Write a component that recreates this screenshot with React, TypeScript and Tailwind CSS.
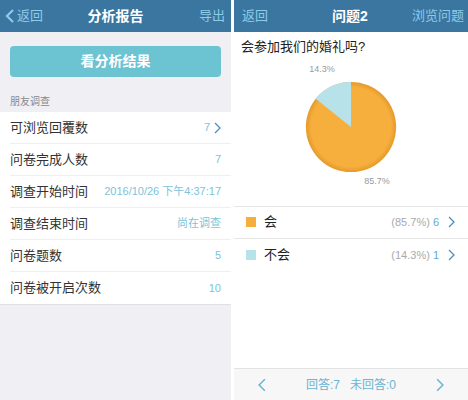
import React from "react";

const font = { fontFamily: '"Liberation Sans", "Noto Sans CJK SC", sans-serif' };

function Chevron({ className = "", dir = "right" }: { className?: string; dir?: "left" | "right" }) {
  return (
    <svg width="7" height="12" viewBox="0 0 7 12" className={className} fill="none">
      {dir === "right" ? (
        <path d="M1 1 L6 6 L1 11" stroke="currentColor" strokeWidth="1.3" />
      ) : (
        <path d="M6 1 L1 6 L6 11" stroke="currentColor" strokeWidth="1.3" />
      )}
    </svg>
  );
}

const rows: { label: string; value: string; chevron?: boolean }[] = [
  { label: "可浏览回覆数", value: "7", chevron: true },
  { label: "问卷完成人数", value: "7" },
  { label: "调查开始时间", value: "2016/10/26 下午4:37:17" },
  { label: "调查结束时间", value: "尚在调查" },
  { label: "问卷题数", value: "5" },
  { label: "问卷被开启次数", value: "10" },
];

function LeftPanel() {
  return (
    <div className="w-[231px] h-[400px] bg-[#efeff4] flex flex-col">
      <div className="h-[32px] bg-[#3b76a0] flex items-center justify-between px-[5px] relative">
        <div className="flex items-center gap-[2px] text-[#8ccbea] text-[13px]">
          <svg width="10" height="16" viewBox="0 0 10 16" fill="none">
            <path d="M8 2 L2 8 L8 14" stroke="#8ccbea" strokeWidth="2.2" />
          </svg>
          <span>返回</span>
        </div>
        <div className="absolute left-0 right-0 text-center text-white text-[14px] font-bold pointer-events-none">分析报告</div>
        <span className="text-[#8ccbea] text-[13px] mr-[1px]">导出</span>
      </div>
      <div className="px-[10px] pt-[14px]">
        <div className="h-[31px] rounded-[4px] bg-[#6cc3d2] flex items-center justify-center text-white text-[14px] font-bold">
          看分析结果
        </div>
      </div>
      <div className="h-[35px] flex items-end pb-[3px] px-[10px] text-[10px] text-[#8a8a8e]">朋友调查</div>
      <div className="bg-white">
        {rows.map((r, i) => (
          <div key={r.label} className="pl-[10px]">
            <div
              className={`h-[32px] flex items-center justify-between pr-[10px] ${
                i < rows.length - 1 ? "border-b border-[#efefef]" : ""
              }`}
            >
              <span className="text-[13px] text-[#333]">{r.label}</span>
              <span className="flex items-center gap-[4px] text-[11px] text-[#7cc3db]">
                {r.value}
                {r.chevron && <Chevron className="text-[#4a8fbe]" />}
              </span>
            </div>
          </div>
        ))}
      </div>
      <div className="border-t border-[#e0e0e4]" />
    </div>
  );
}

function Pie() {
  return (
    <svg width="96" height="96" viewBox="0 0 100 100">
      <defs>
        <radialGradient id="og" cx="50%" cy="50%" r="50%">
          <stop offset="88%" stopColor="#f6ae3c" />
          <stop offset="100%" stopColor="#e59a2a" />
        </radialGradient>
      </defs>
      <circle cx="50" cy="50" r="47" fill="url(#og)" />
      <path d="M50,50 L50,3 A47,47 0 0,0 13.2,20.7 Z" fill="#b8e2ea" />
    </svg>
  );
}

function RightPanel() {
  return (
    <div className="w-[234px] h-[400px] bg-white flex flex-col">
      <div className="h-[32px] bg-[#3b76a0] flex items-center justify-between px-[6px] relative">
        <span className="text-[#8ccbea] text-[13px] ml-[2px]">返回</span>
        <div className="absolute left-0 right-0 text-center text-white text-[14px] font-bold pointer-events-none pr-[2px]">问题2</div>
        <span className="text-[#8ccbea] text-[13px] -mr-[2px]">浏览问题</span>
      </div>
      <div className="px-[7px] pt-[5px] text-[13px] text-[#222]">会参加我们的婚礼吗?</div>
      <div className="flex flex-col items-center h-[149px]">
        <div className="w-full flex justify-center">
          <span className="text-[9px] text-[#9a9a9a] mt-[6px] -ml-[58px]">14.3%</span>
        </div>
        <div className="mt-[3px]">
          <Pie />
        </div>
        <div className="w-full flex justify-center">
          <span className="text-[9px] text-[#9a9a9a] ml-[52px]">85.7%</span>
        </div>
      </div>
      <div className="border-t border-[#e6e6e6]">
        <div className="h-[32px] flex items-center pl-[12px] pr-[13px] border-b border-[#e6e6e6]">
          <span className="w-[10px] h-[10px] bg-[#f6ae3c]" />
          <span className="ml-[8px] text-[13px] text-[#222]">会</span>
          <span className="ml-auto text-[11px] text-[#aaa]">(85.7%)</span>
          <span className="ml-[3px] text-[11px] text-[#5fa9d0]">6</span>
          <Chevron className="ml-[9px] text-[#4a8fbe]" />
        </div>
        <div className="h-[33px] flex items-center pl-[12px] pr-[13px]">
          <span className="w-[10px] h-[10px] bg-[#b8e2ea]" />
          <span className="ml-[8px] text-[13px] text-[#222]">不会</span>
          <span className="ml-auto text-[11px] text-[#aaa]">(14.3%)</span>
          <span className="ml-[3px] text-[11px] text-[#5fa9d0]">1</span>
          <Chevron className="ml-[9px] text-[#4a8fbe]" />
        </div>
      </div>
      <div className="flex-1" />
      <div className="h-[32px] bg-[#f7f7f8] border-t border-[#e2e2e2] flex items-center justify-between px-[24px] text-[#6ab4d1]">
        <Chevron dir="left" className="text-[#6ab4d1] w-[8px] h-[14px]" />
        <span className="text-[12px]">回答:7&nbsp;&nbsp;&nbsp;未回答:0</span>
        <Chevron className="text-[#6ab4d1] w-[8px] h-[14px]" />
      </div>
    </div>
  );
}

export default function App() {
  return (
    <div className="w-[468px] h-[400px] bg-white flex gap-[3px] overflow-hidden" style={font}>
      <LeftPanel />
      <RightPanel />
    </div>
  );
}
